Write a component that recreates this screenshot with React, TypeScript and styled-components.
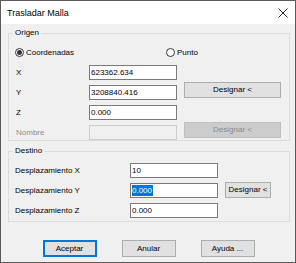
import React from "react";
import styled, { createGlobalStyle, css } from "styled-components";

const GlobalStyle = createGlobalStyle`
  html, body {
    margin: 0;
    padding: 0;
    background: #ffffff;
  }
  body {
    font-family: "Liberation Sans", Arial, sans-serif;
    font-size: 8px;
    color: #000000;
  }
`;

type FieldRow = {
  label: string;
  value: string;
  disabled?: boolean;
  selected?: boolean;
};

const origenRows: FieldRow[] = [
  { label: "X", value: "623362.634" },
  { label: "Y", value: "3208840.416" },
  { label: "Z", value: "0.000" },
  { label: "Nombre", value: "", disabled: true },
];

const destinoRows: FieldRow[] = [
  { label: "Desplazamiento X", value: "10" },
  { label: "Desplazamiento Y", value: "0.000", selected: true },
  { label: "Desplazamiento Z", value: "0.000" },
];

function CloseIcon() {
  return (
    <svg width="10" height="10" viewBox="0 0 10 10">
      <path d="M0.5 0.5 L9.5 9.5 M9.5 0.5 L0.5 9.5" stroke="#222" strokeWidth="1" />
    </svg>
  );
}

function Radio({ checked, label }: { checked: boolean; label: string }) {
  return (
    <RadioLabel>
      <RadioCircle $checked={checked} />
      {label}
    </RadioLabel>
  );
}

function TextBox({ row }: { row: FieldRow }) {
  return (
    <Input $disabled={row.disabled}>
      {row.selected ? <Selection>{row.value}</Selection> : row.value}
    </Input>
  );
}

export default function App() {
  return (
    <>
      <GlobalStyle />
      <Window>
        <TitleBar>
          <Title>Trasladar Malla</Title>
          <CloseIcon />
        </TitleBar>
        <Body>
          <Group>
            <Legend>Origen</Legend>
            <GroupContent $pad="6px 7px 0 7px">
              <RadioRow>
                <Radio checked label="Coordenadas" />
                <Radio checked={false} label="Punto" />
              </RadioRow>
              <FieldGrid $labelWidth={73} $buttonWidth={97}>
                {origenRows.map((row, i) => (
                  <React.Fragment key={row.label}>
                    <Label $disabled={row.disabled} style={{ gridRow: i + 1 }}>
                      {row.label}
                    </Label>
                    <InputCell style={{ gridRow: i + 1 }}>
                      <TextBox row={row} />
                    </InputCell>
                  </React.Fragment>
                ))}
                <SideButton style={{ gridRow: 2 }}>Designar &lt;</SideButton>
                <SideButton disabled style={{ gridRow: 4 }}>
                  Designar &lt;
                </SideButton>
              </FieldGrid>
            </GroupContent>
          </Group>
          <Group $gap>
            <Legend>Destino</Legend>
            <GroupContent $pad="7px 6px 3px 6px">
              <FieldGrid $labelWidth={115} $buttonWidth={46}>
                {destinoRows.map((row, i) => (
                  <React.Fragment key={row.label}>
                    <Label style={{ gridRow: i + 1 }}>{row.label}</Label>
                    <InputCell style={{ gridRow: i + 1 }}>
                      <TextBox row={row} />
                    </InputCell>
                  </React.Fragment>
                ))}
                <SideButton $small style={{ gridRow: 2 }}>
                  Designar &lt;
                </SideButton>
              </FieldGrid>
            </GroupContent>
          </Group>
          <ButtonRow>
            <DialogButton $default>Aceptar</DialogButton>
            <DialogButton>Anular</DialogButton>
            <DialogButton>Ayuda ...</DialogButton>
          </ButtonRow>
        </Body>
      </Window>
    </>
  );
}

const Window = styled.div`
  width: 296px;
  height: 263px;
  box-sizing: border-box;
  border: 1px solid #5a5a5a;
  display: flex;
  flex-direction: column;
  background: #f0f0f0;
`;

const TitleBar = styled.div`
  height: 23px;
  flex: none;
  background: #ffffff;
  display: flex;
  align-items: center;
  justify-content: space-between;
  padding: 0 7px 0 6px;
  box-sizing: border-box;
`;

const Title = styled.span`
  font-size: 9px;
  color: #000;
`;

const Body = styled.div`
  flex: 1;
  display: flex;
  flex-direction: column;
  padding: 4px 5px 0 7px;
`;

const Group = styled.fieldset<{ $gap?: boolean }>`
  margin: ${({ $gap }) => ($gap ? "5px 0 0 0" : "0")};
  padding: 0;
  min-width: 0;
  border: 1px solid #dcdcdc;
`;

const Legend = styled.legend`
  margin-left: 4px;
  padding: 0 2px;
  font-size: 8px;
  line-height: 10px;
  color: #000;
`;

const GroupContent = styled.div<{ $pad: string }>`
  padding: ${({ $pad }) => $pad};
  display: flex;
  flex-direction: column;
`;

const RadioRow = styled.div`
  height: 17px;
  display: grid;
  grid-template-columns: 151px 1fr;
  align-items: center;
  margin-left: -1px;
  margin-bottom: 4px;
`;

const RadioLabel = styled.label`
  display: flex;
  align-items: center;
  gap: 2px;
  line-height: 10px;
`;

const RadioCircle = styled.span<{ $checked: boolean }>`
  width: 9px;
  height: 9px;
  box-sizing: border-box;
  border-radius: 50%;
  border: 1px solid #333333;
  background: #ffffff;
  display: inline-flex;
  align-items: center;
  justify-content: center;
  &::after {
    content: "";
    width: 5px;
    height: 5px;
    border-radius: 50%;
    background: ${({ $checked }) => ($checked ? "#333333" : "transparent")};
  }
`;

const FieldGrid = styled.div<{ $labelWidth: number; $buttonWidth: number }>`
  display: grid;
  grid-template-columns: ${({ $labelWidth, $buttonWidth }) =>
    `${$labelWidth}px 88px ${$buttonWidth + 7}px`};
  grid-auto-rows: 15px;
  row-gap: 5px;
  align-items: center;
`;

const Label = styled.span<{ $disabled?: boolean }>`
  grid-column: 1;
  color: ${({ $disabled }) => ($disabled ? "#8d8d8d" : "#000")};
  line-height: 10px;
`;

const InputCell = styled.div`
  grid-column: 2;
`;

const Input = styled.div<{ $disabled?: boolean }>`
  height: 15px;
  box-sizing: border-box;
  border: 1px solid ${({ $disabled }) => ($disabled ? "#cccccc" : "#7a7a7a")};
  background: ${({ $disabled }) => ($disabled ? "#f0f0f0" : "#ffffff")};
  display: flex;
  align-items: center;
  padding-left: 1px;
  font-size: 8px;
  line-height: 11px;
`;

const Selection = styled.span`
  background: #0078d7;
  color: #ffffff;
  padding-right: 1px;
`;

const buttonBase = css`
  font-family: "Liberation Sans", Arial, sans-serif;
  font-size: 8px;
  line-height: 10px;
  padding: 0;
  box-sizing: border-box;
  background: #e1e1e1;
  border: 1px solid #adadad;
  color: #000;
  border-radius: 0;
`;

const SideButton = styled.button<{ $small?: boolean }>`
  ${buttonBase}
  grid-column: 3;
  height: 16px;
  align-self: start;
  margin-left: 7px;
  margin-top: ${({ $small }) => ($small ? "-1px" : "-3px")};
  &:disabled {
    background: #cccccc;
    border-color: #bfbfbf;
    color: #8a8a8a;
  }
`;

const ButtonRow = styled.div`
  display: flex;
  justify-content: center;
  gap: 25px;
  margin-top: 18px;
  margin-left: -1px;
`;

const DialogButton = styled.button<{ $default?: boolean }>`
  ${buttonBase}
  width: 54px;
  height: 17px;
  ${({ $default }) =>
    $default &&
    css`
      border-color: #0078d7;
      box-shadow: inset 0 0 0 1px #0078d7;
    `}
`;
